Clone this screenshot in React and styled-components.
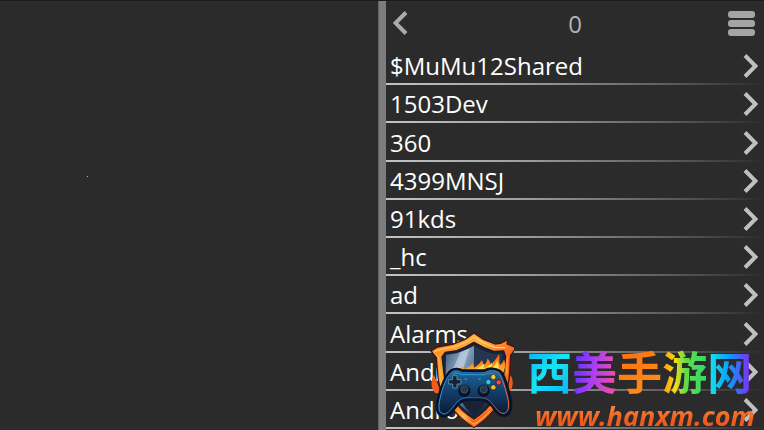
import React from 'react';
import styled, { createGlobalStyle } from 'styled-components'

const GlobalStyle = createGlobalStyle`
  * { box-sizing: border-box; }
  body {
    margin: 0;
    background: #2b2b2b;
    color: #fff;
    font-family: "Open Sans", "Noto Sans CJK SC", sans-serif;
  }
`

const Screen = styled.div`
  position: relative;
  display: grid;
  grid-template-columns: 1fr 8px 1fr;
  min-height: 100vh;
  border-top: 1px solid #1c1c1c;
  overflow: hidden;
`

const Preview = styled.main`
  padding: 175px 0 0 87px;
`

const Dot = styled.div`
  width: 1px;
  height: 1px;
  background: #b4b4b4;
`

const Splitter = styled.div`
  background: #7d7d7d;
  border-left: 1px solid #636363;
`

const Handle = styled.div`
  position: absolute;
  top: -1px;
  left: 50%;
  width: 68px;
  height: 1px;
  margin-left: -37px;
  background: #484848;
`

const Browser = styled.section`
  display: flex;
  flex-direction: column;
  min-width: 0;
`

const Header = styled.header`
  display: flex;
  align-items: center;
  justify-content: space-between;
  height: 46px;
  padding: 0 9px 2px 7px;
`

const IconButton = styled.button`
  display: flex;
  padding: 0;
  border: 0;
  background: none;
  color: #a4a4a4;
`

const Title = styled.h1`
  margin: 0;
  padding: 2px 0 0 14px;
  color: #b2b2b2;
  font-size: 24px;
  font-weight: 400;
  line-height: 32px;
`

const List = styled.ul`
  display: flex;
  flex: 1;
  flex-direction: column;
  margin: 0;
  padding: 0 0 1px;
  list-style: none;
`

const Row = styled.li`
  display: flex;
  flex: 1;
  min-height: 38px;
  border-bottom: 2px solid;
  border-image: linear-gradient(90deg, #c4c4c4, #a0a0a0 35%, #5c5c5c 75%, #2b2b2b) 1;
`

const RowLink = styled.a`
  display: flex;
  flex: 1;
  align-items: center;
  justify-content: space-between;
  padding: 2px 6px 0 4px;
  color: #fff;
  font-size: 24px;
  line-height: 32px;
  text-decoration: none;
`

const Chevron = styled.svg`
  display: block;
  width: 15px;
  height: 24px;
  fill: none;
  stroke: ${p => p.$color};
  stroke-width: 4;
`

const Watermark = styled.aside`
  position: absolute;
  right: 7px;
  bottom: 0;
  display: flex;
  align-items: flex-end;
  gap: 13px;
  pointer-events: none;
`

const Shield = styled.svg`
  width: 84px;
  height: 98px;
  margin-bottom: 1px;
`

const Brand = styled.div`
  display: flex;
  flex-direction: column;
`

const BrandName = styled.div`
  display: flex;
  font-family: "Noto Sans CJK SC", sans-serif;
  font-size: 45px;
  font-weight: 700;
  line-height: 50px;
`

const Glyph = styled.span`
  background: ${p => p.$fill};
  background-clip: text;
  color: transparent;
`

const Site = styled.div`
  padding: 6px 2px 0 8px;
  background: linear-gradient(#f9893a 25%, #f05a1c 75%);
  background-clip: text;
  color: transparent;
  font-family: "Open Sans", sans-serif;
  font-size: 27px;
  font-style: italic;
  font-weight: 700;
  line-height: 28px;
  white-space: nowrap;
`

const folders = ['$MuMu12Shared', '1503Dev', '360', '4399MNSJ', '91kds', '_hc', 'ad', 'Alarms', 'Android', 'Android']

const glyphs = [
  { char: '西', fill: 'linear-gradient(135deg, #08b8f5 10%, #18e4f5 50%, #08b4f5 95%)' },
  { char: '美', fill: 'linear-gradient(100deg, #6d35ff 15%, #a63df5 45%, #f04cb0 90%)' },
  { char: '手', fill: 'linear-gradient(135deg, #ff6a10, #ff9418)' },
  { char: '游', fill: 'linear-gradient(90deg, #ffa80a 8%, #f2dc18 30%, #62dc48 52%, #30d86c)' },
  { char: '网', fill: 'linear-gradient(90deg, #12dcee 10%, #0b9dfa 48%, #4068fa 70%, #7636f5 92%)' },
]

const BackIcon = () => (
  <Chevron viewBox="0 0 15 24" $color="#aaa" aria-hidden="true">
    <path d="M13 1.5 2.5 12 13 22.5" />
  </Chevron>
)

const NextIcon = () => (
  <Chevron viewBox="0 0 15 24" $color="#c0c0c0" aria-hidden="true">
    <path d="M2 1.5 12.5 12 2 22.5" />
  </Chevron>
)

const MenuIcon = () => (
  <svg width="27" height="25" viewBox="0 0 27 25" fill="currentColor" aria-hidden="true">
    <rect width="27" height="7" rx="3" />
    <rect y="9" width="27" height="7" rx="3" />
    <rect y="18" width="27" height="7" rx="3" />
  </svg>
)

const ShieldLogo = () => (
  <Shield viewBox="28 18 252 294" aria-hidden="true">
    <defs>
      <linearGradient id="rim" x1="0" y1="0" x2="1" y2="1">
        <stop offset="0" stopColor="#ff7a18" />
        <stop offset=".35" stopColor="#ffb347" />
        <stop offset=".6" stopColor="#f4611c" />
        <stop offset="1" stopColor="#ffa828" />
      </linearGradient>
      <linearGradient id="steel" x1="0" y1="0" x2="1" y2="1">
        <stop offset="0" stopColor="#3d5878" />
        <stop offset=".4" stopColor="#8ba9c4" />
        <stop offset="1" stopColor="#1c304c" />
      </linearGradient>
      <linearGradient id="fire" x1="0" y1="0" x2="0" y2="1">
        <stop offset="0" stopColor="#ff5c14" />
        <stop offset=".5" stopColor="#ff8c1a" />
        <stop offset="1" stopColor="#ffc840" />
      </linearGradient>
      <linearGradient id="pad" x1="0" y1="0" x2="0" y2="1">
        <stop offset="0" stopColor="#1b6ba0" />
        <stop offset=".5" stopColor="#123d68" />
        <stop offset="1" stopColor="#0a1732" />
      </linearGradient>
      <linearGradient id="edge" x1="0" y1="0" x2="1" y2="0">
        <stop offset="0" stopColor="#319be8" />
        <stop offset=".55" stopColor="#2758a8" />
        <stop offset="1" stopColor="#ff6b2a" />
      </linearGradient>
    </defs>
    <path d="M43 204C28 186 31 164 40 149l9 22 12 35zM266 202c13-17 13-35 4-51l-7 20-12 34z" fill="#f55b18" />
    <path d="M160 24 188 43 223 57 242 54 262 44 259 57 282 66 284 72 270 91 267 143C265 210 221 266 160 307 99 270 55 214 51 147L47 98 31 78 50 66 99 57 133 43Z" fill="url(#rim)" stroke="#44150f" strokeWidth="4" strokeLinejoin="round" />
    <path d="M160 36 190 54 222 67 253 68" fill="none" stroke="#ffd36a" strokeWidth="4" />
    <path d="M41 80 60 73 103 65 136 51 159 36" fill="none" stroke="#ffca65" strokeWidth="4" />
    <path d="M38 82 54 96 60 150M260 94 258 148" fill="none" stroke="#ffb640" strokeWidth="3" />
    <path d="M160 52 190 68 219 79 249 78 255 96 249 147C246 195 212 247 160 282 110 249 75 205 70 147L64 96 74 82 108 77 136 65Z" fill="#17243a" stroke="#30171b" strokeWidth="4" />
    <path d="M160 62 136 74 108 85 76 89 75 145C79 202 113 242 160 274Z" fill="url(#steel)" />
    <path d="M160 62 188 77 218 87 245 87 241 145C235 200 206 241 160 274Z" fill="#26364e" />
    <path d="m119 82 28-12-20 64-38 15Z" fill="#d2e0e9" opacity=".55" />
    <path d="M160 190 108 196C120 232 140 258 160 274 182 258 202 230 212 196Z" fill="#182338" />
    <path d="M112 140c4-9 10-13 17-14l3 8C143 125 150 122 155 114c6 6 5 10 4 14 10-6 18-10 24-22 7 8 3 14 0 19 11-7 16-13 17-24 9 6 9 13 7 20 12-8 18-18 28-34 3 14-2 22 4 33 6-6 9-10 11-17 7 17 3 34-7 47z" fill="url(#fire)" />
    <path d="M161 139c9-13 21-13 28-24 3 8-1 12-3 17 12-4 20-8 26-20 3 9 0 15-3 20 11-4 17-14 20-26 7 15 7 29 0 42z" fill="#ffdf56" />
    <path d="M91 137c9-7 25-6 34 0h66c14-8 33-8 47 1 12 9 25 53 31 84 6 29-2 48-17 50-16 2-27-14-39-30-9-12-18-18-36-18h-35c-18 0-27 8-37 22-14 18-25 31-40 27-17-5-18-28-12-53 7-31 22-71 38-83Z" fill="url(#pad)" stroke="#07142a" strokeWidth="8" strokeLinejoin="round" />
    <path d="M92 143c8-6 22-6 31 0h70c11-7 28-7 40 1 11 11 23 51 29 79 5 23 0 39-11 42-13 2-23-12-35-27-10-14-21-20-39-20h-36c-19 0-29 8-40 23-12 16-23 29-35 25-13-4-13-22-8-45 7-31 19-67 34-78Z" fill="none" stroke="url(#edge)" strokeWidth="3" />
    <path d="M96 148c9-5 18-4 27 1h69c13-6 25-6 35 2" fill="none" stroke="#2f9cc9" strokeWidth="3" />
    <path d="M96 152h13v12h12v13h-12v12H96v-12H84v-13h12z" fill="#122237" stroke="#64829d" strokeWidth="3" />
    <circle cx="131" cy="197" r="16" fill="#101c2c" stroke="#050b18" strokeWidth="4" />
    <circle cx="131" cy="193" r="11" fill="#28384c" stroke="#52657a" strokeWidth="2" />
    <circle cx="189" cy="197" r="16" fill="#101c2c" stroke="#050b18" strokeWidth="4" />
    <circle cx="189" cy="193" r="11" fill="#28384c" stroke="#52657a" strokeWidth="2" />
    <g stroke="#0b1b30" strokeWidth="2">
      <circle cx="218" cy="156" r="8" fill="#ffc52f" />
      <circle cx="203" cy="171" r="8" fill="#36c7ed" />
      <circle cx="234" cy="172" r="8" fill="#f34b4d" />
      <circle cx="218" cy="187" r="8" fill="#f5bb27" />
    </g>
    <path d="m132 161 6 3m42-3-6 3" stroke="#3793c2" strokeWidth="4" />
    <path d="M111 246c16 18 31 31 49 42 20-12 37-27 50-44l7 10c-15 20-34 36-57 52-23-14-42-31-57-50z" fill="url(#rim)" />
    <path d="M112 258c15 17 29 28 48 40 19-12 34-25 48-40" fill="none" stroke="#ffc36a" strokeWidth="3" />
  </Shield>
)

export default function App() {
  return (
    <>
      <GlobalStyle />
      <Screen>
        <Handle />
        <Preview><Dot /></Preview>
        <Splitter />
        <Browser>
          <Header>
            <IconButton aria-label="Back"><BackIcon /></IconButton>
            <Title>0</Title>
            <IconButton aria-label="Menu"><MenuIcon /></IconButton>
          </Header>
          <List>
            {folders.map((name, i) => (
              <Row key={i}>
                <RowLink href="#">{name}<NextIcon /></RowLink>
              </Row>
            ))}
          </List>
        </Browser>
        <Watermark>
          <ShieldLogo />
          <Brand>
            <BrandName>
              {glyphs.map(g => <Glyph key={g.char} $fill={g.fill}>{g.char}</Glyph>)}
            </BrandName>
            <Site>www.hanxm.com</Site>
          </Brand>
        </Watermark>
      </Screen>
    </>
  )
}
